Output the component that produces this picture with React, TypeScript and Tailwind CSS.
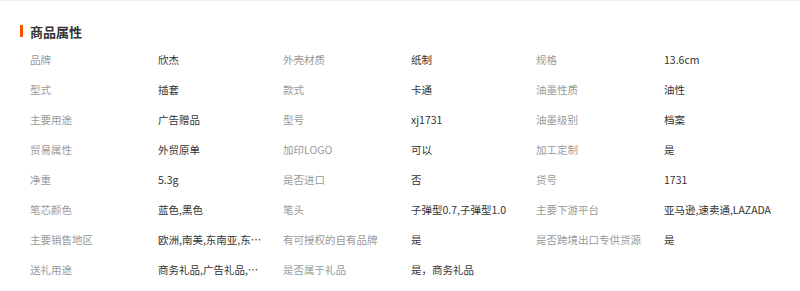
const attrs: [string, string][] = [
  ['品牌', '欣杰'],
  ['外壳材质', '纸制'],
  ['规格', '13.6cm'],
  ['型式', '插套'],
  ['款式', '卡通'],
  ['油墨性质', '油性'],
  ['主要用途', '广告赠品'],
  ['型号', 'xj1731'],
  ['油墨级别', '档案'],
  ['贸易属性', '外贸原单'],
  ['加印LOGO', '可以'],
  ['加工定制', '是'],
  ['净重', '5.3g'],
  ['是否进口', '否'],
  ['货号', '1731'],
  ['笔芯颜色', '蓝色,黑色'],
  ['笔头', '子弹型0.7,子弹型1.0'],
  ['主要下游平台', '亚马逊,速卖通,LAZADA'],
  ['主要销售地区', '欧洲,南美,东南亚,东北亚,中东'],
  ['有可授权的自有品牌', '是'],
  ['是否跨境出口专供货源', '是'],
  ['送礼用途', '商务礼品,广告礼品,节日礼品'],
  ['是否属于礼品', '是，商务礼品'],
];

export default function App() {
  return (
    <div
      className="w-[800px] h-[291px] bg-white border-t border-[#eeeeee] overflow-hidden"
      style={{ fontFamily: '"Microsoft YaHei", "Noto Sans CJK SC", sans-serif' }}
    >
      <div className="flex items-center h-[20px] mt-[20px] pl-[20px]">
        <span className="w-[3px] h-[12px] bg-[#ff5000]" />
        <h2 className="ml-[7px] text-[13px] font-bold text-[#333333] leading-none">商品属性</h2>
      </div>
      <div className="grid grid-cols-[128px_125px_128px_125px_128px_145px] pl-[30px] mt-[4px]">
        {attrs.map(([label, value], i) => (
          <div key={label} className="contents">
            <div className="h-[30px] flex items-center text-[10.5px] text-[#999999] whitespace-nowrap">
              {label}
            </div>
            <div className="h-[30px] flex items-center text-[10.5px] text-[#333333] min-w-0 whitespace-nowrap">
              <span className={i % 3 === 0 ? 'truncate max-w-[104px]' : ''}>{value}</span>
            </div>
          </div>
        ))}
      </div>
    </div>
  );
}
